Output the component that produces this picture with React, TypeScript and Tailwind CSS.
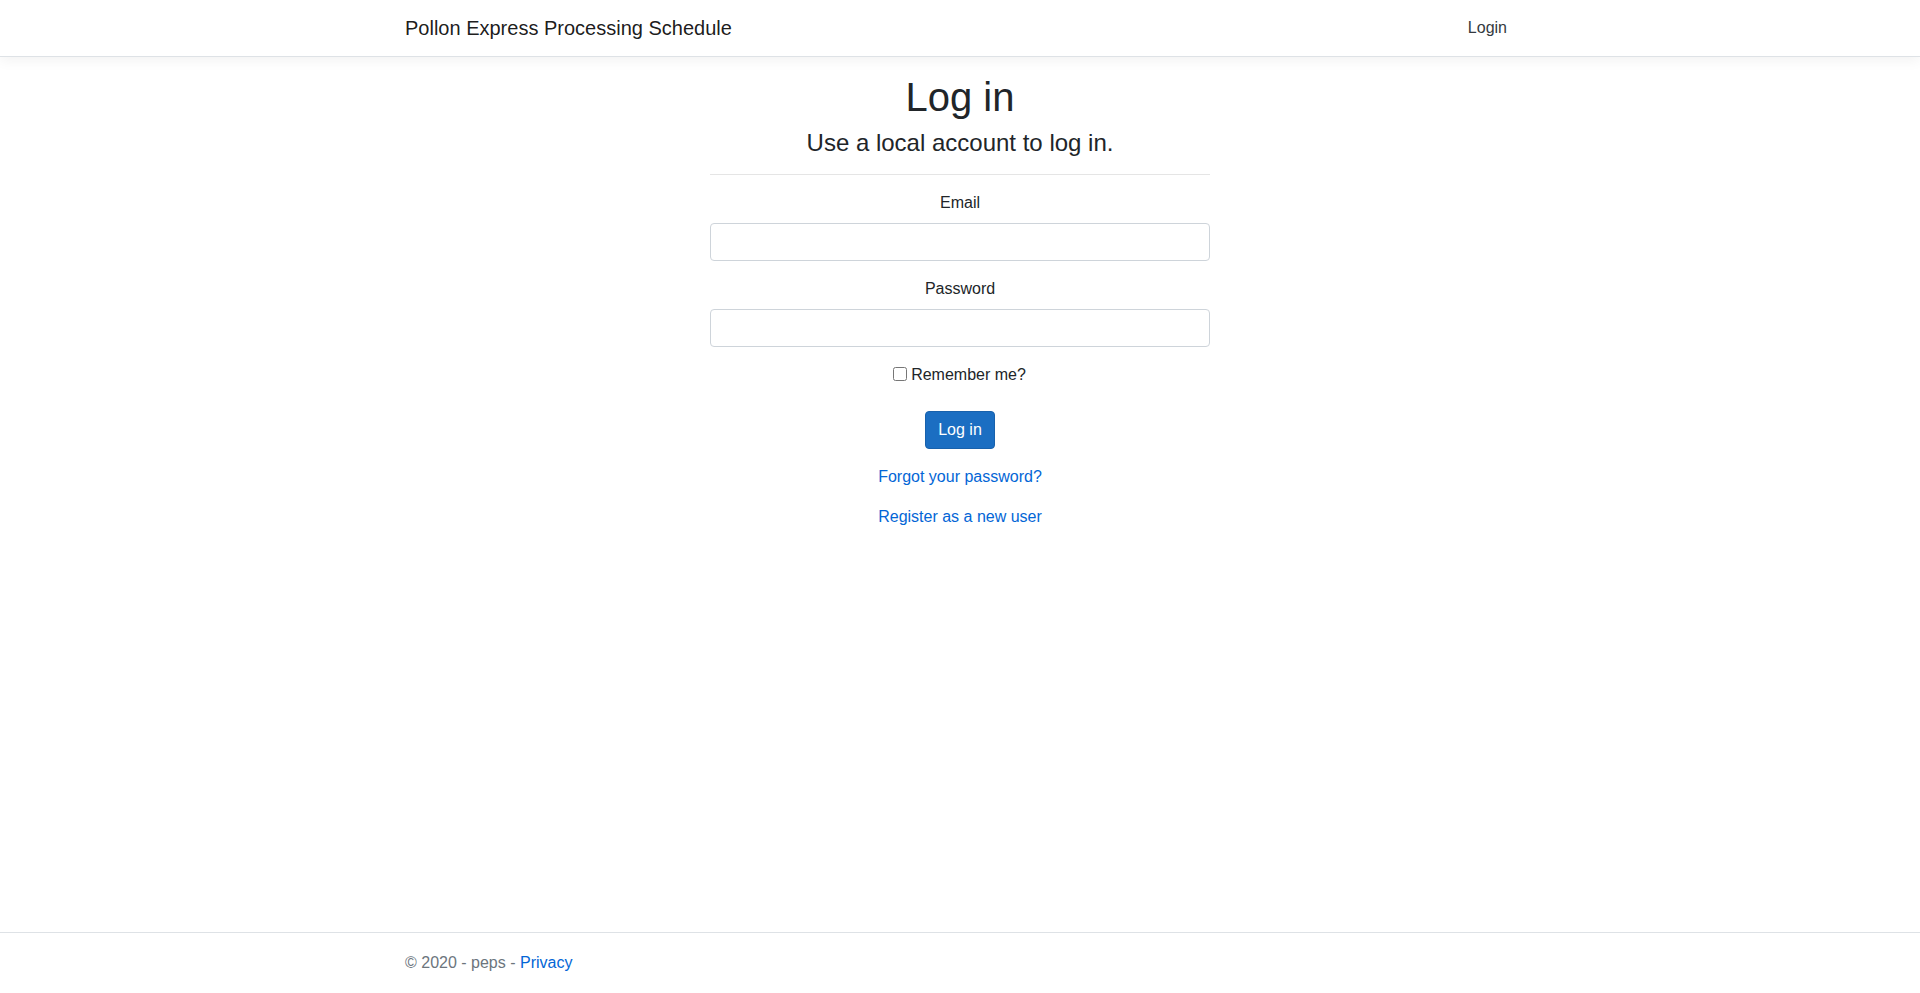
import { useState } from 'react';

export default function App() {
  const [email, setEmail] = useState('');
  const [password, setPassword] = useState('');
  const [remember, setRemember] = useState(false);

  return (
    <div className="flex min-h-screen flex-col bg-white font-['Liberation_Sans',Arial,sans-serif] text-base leading-6 text-[#212529]">
      <header>
        <nav className="mb-4 border-b border-[#dee2e6] bg-white px-4 py-2 shadow-[0_4px_12px_rgba(0,0,0,0.05)]">
          <div className="mx-auto flex w-[1140px] items-center justify-between px-[15px]">
            <a href="#" className="py-[5px] text-[20px] leading-[30px] text-black/90">
              Pollon Express Processing Schedule
            </a>
            <ul className="flex">
              <li>
                <a href="#" className="block px-2 py-2 text-[#343a40]">
                  Login
                </a>
              </li>
            </ul>
          </div>
        </nav>
      </header>

      <main className="mx-auto w-[1140px] px-[15px] pb-4 text-center">
        <h1 className="mb-2 text-[40px] leading-[48px] font-medium">Log in</h1>
        <div className="mx-auto w-[500px]">
          <form onSubmit={(e) => e.preventDefault()}>
            <h4 className="text-[24px] leading-[28.8px] font-medium">Use a local account to log in.</h4>
            <hr className="my-4 border-t border-black/10" />

            <div className="mb-4">
              <label htmlFor="email" className="mb-2 inline-block">Email</label>
              <input
                id="email"
                type="email"
                value={email}
                onChange={(e) => setEmail(e.target.value)}
                className="block h-[38px] w-full rounded-[4px] border border-[#ced4da] bg-white px-3 py-1.5 text-[#495057] outline-none"
              />
            </div>

            <div className="mb-4">
              <label htmlFor="password" className="mb-2 inline-block">Password</label>
              <input
                id="password"
                type="password"
                value={password}
                onChange={(e) => setPassword(e.target.value)}
                className="block h-[38px] w-full rounded-[4px] border border-[#ced4da] bg-white px-3 py-1.5 text-[#495057] outline-none"
              />
            </div>

            <div className="mb-4">
              <div>
                <label className="mb-2 inline-block pr-[5px]">
                  <input
                    type="checkbox"
                    checked={remember}
                    onChange={(e) => setRemember(e.target.checked)}
                    className="mr-[4px] ml-1 h-[14px] w-[14px] align-[-1px]"
                  />
                  Remember me?
                </label>
              </div>
            </div>

            <div className="mb-4">
              <button
                type="submit"
                className="h-[38px] rounded-[4px] border border-[#1861ac] bg-[#1b6ec2] px-3 py-1.5 text-white"
              >
                Log in
              </button>
            </div>

            <p className="mb-4">
              <a href="#" className="text-[#0366d6]">Forgot your password?</a>
            </p>
            <p className="mb-4">
              <a href="#" className="text-[#0366d6]">Register as a new user</a>
            </p>
          </form>
        </div>
      </main>

      <footer className="mt-auto border-t border-[#dee2e6] leading-[60px] whitespace-nowrap text-[#6c757d]">
        <div className="mx-auto w-[1140px] px-[15px]">
          &copy; 2020 - peps - <a href="#" className="text-[#0366d6]">Privacy</a>
        </div>
      </footer>
    </div>
  );
}
